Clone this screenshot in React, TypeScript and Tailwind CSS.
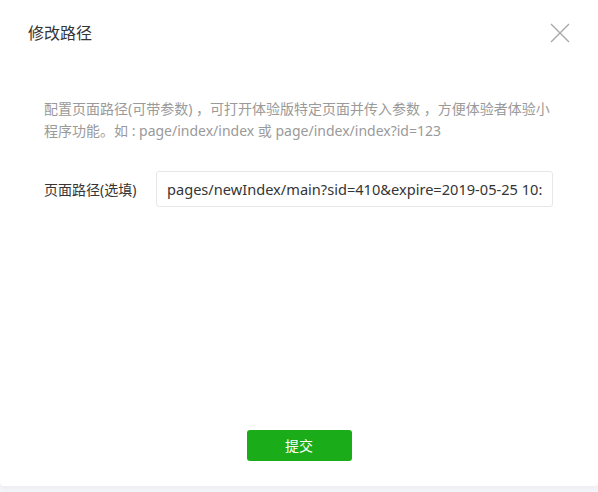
export default function App() {
  return (
    <div className="h-[492px] w-[598px] bg-[#f4f5f9] font-['Noto_Sans','Noto_Sans_CJK_SC',sans-serif]">
      <div className="flex h-[486px] flex-col rounded-b-[4px] bg-white shadow-[0_2px_6px_rgba(0,0,0,0.04)]">
        {/* header */}
        <div className="flex h-[66px] items-center justify-between pl-[28px] pr-[28px]">
          <h2 className="text-[16px] text-[#353535]">修改路径</h2>
          <button className="flex h-[20px] w-[20px] items-center justify-center">
            <svg width="20" height="20" viewBox="0 0 20 20">
              <path d="M1 1L19 19M19 1L1 19" stroke="#a8a8a8" strokeWidth="1.4" fill="none" />
            </svg>
          </button>
        </div>

        <div className="flex-1 px-[44px] pt-[32px]">
          <p className="text-[14px] leading-[22px] text-[#9a9a9a]">
            配置页面路径(可带参数) ，可打开体验版特定页面并传入参数 ，方便体验者体验小程序功能。如 : page/index/index 或 page/index/index?id=123
          </p>

          <div className="mt-[29px] flex items-center">
            <label className="w-[112px] text-[14px] text-[#353535]">页面路径(选填)</label>
            <input
              readOnly
              value="pages/newIndex/main?sid=410&expire=2019-05-25 10:00:00"
              className="h-[36px] w-[397px] rounded-[3px] border border-[#e7e7eb] px-[10px] text-[14.6px] text-[#353535] outline-none"
            />
          </div>
        </div>

        <div className="flex justify-center pb-[25px]">
          <button className="h-[31px] w-[105px] rounded-[3px] bg-[#1aad19] text-[14px] text-white">提交</button>
        </div>
      </div>
    </div>
  );
}
